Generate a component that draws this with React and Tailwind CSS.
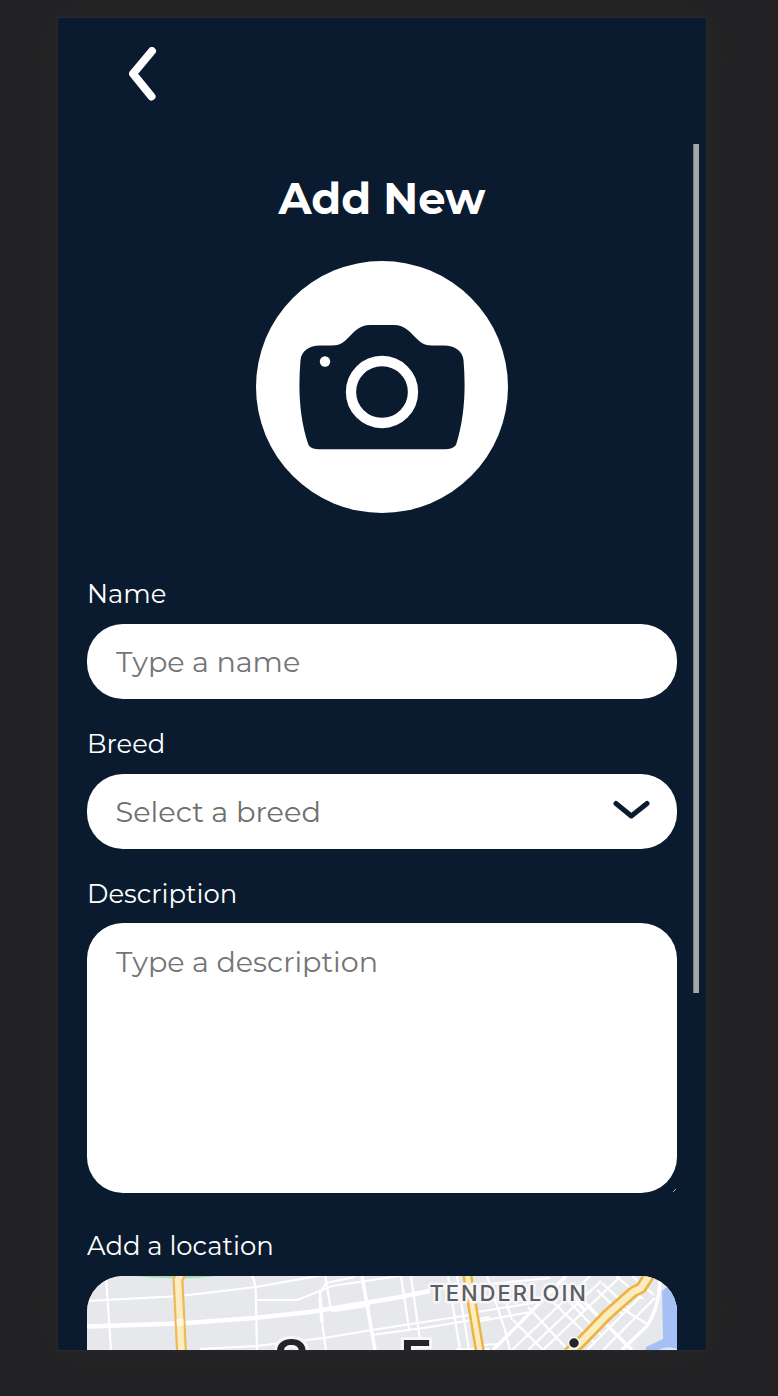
import React from "react";

function BackIcon() {
  return (
    <svg className="block" width="28" height="54" viewBox="129 47 28 54" fill="none">
      <path d="M152 51L133 73.700L151.500 96.500" stroke="#fff" strokeWidth="8" strokeLinecap="round" strokeLinejoin="round" />
    </svg>
  );
}

function CameraIcon() {
  return (
    <svg className="block" width="166" height="125" viewBox="299 325 166 125">
      <path
        fill="#0a1b30"
        d="M370 325H394C404 325 409 331 415 337C420 342 424 345.500 432 345.500H444C455 345.500 462.500 351 463.500 360C466 390 464.500 418 456 445C453.500 448 450 449.300 445 449.300H319C314 449.300 310.500 448 308.500 445C299.500 418 298 390 300.500 360C301.500 351 309 345.500 320 345.500H332C340 345.500 344 342 349 337C355 331 360 325 370 325Z"
      />
      <circle cx="382" cy="392" r="31" fill="#0a1b30" stroke="#fff" strokeWidth="10.300" />
      <circle cx="325" cy="361.500" r="5.200" fill="#fff" />
    </svg>
  );
}

function CityMap() {
  return (
    <svg className="block" width="590" height="74" viewBox="87 1276 590 74">
      <rect x="87" y="1276" width="590" height="74" fill="#e7e8ec" />
      <path d="M126 1275Q170 1281 214 1276.500V1275Z" fill="#a8dcb3" />
      <path d="M677 1283L668 1286L662 1291L663 1339L646 1347V1350H677Z" fill="#a5c0f5" />
      <path d="M658 1350Q668 1345 677 1349V1350Z" fill="#d8e5fc" />

      <g fill="none" stroke="#fff" strokeWidth="2.200">
        <path d="M106 1276L111 1350M87 1301L180 1296L256 1287L324 1275M252 1276Q256 1282 256 1300L257 1350M256 1300H297L320 1291L332 1286L400 1276" />
        <path d="M325 1275L331 1310M326 1283L320 1293L322 1322L326 1350M326 1283L355 1277M200 1349L256 1346L324 1338L372 1330L470 1315" />
        <path d="M401 1276L409 1329M411 1276L420 1340M372 1335L430 1327L490 1317M448 1276L460 1350M457 1276L469 1350M470 1313L534 1303M470 1323L530 1312M470 1286L550 1278M500 1284L512 1320" />
        <path d="M487 1276L505 1330L510 1350M481 1345L500 1344M513 1320L543 1350M528 1307L568 1350M547 1296L595 1343M558 1290L602 1336M597 1290L622 1314M602 1283L630 1309M620 1307L647 1324" />
        <path d="M512 1350L590 1276M528 1350L601 1281M543 1350L620 1277M570 1350L618 1302M587 1350L640 1297M603 1350L655 1298M616 1276L643 1299M632 1276L654 1295" />
      </g>
      <g fill="none" stroke="#fff" strokeWidth="4.500">
        <path d="M87 1326.500L180 1323.500L254 1318L310 1312L395 1298L430 1291" />
        <path d="M331 1310L370 1304" strokeWidth="5" />
        <path d="M362 1276L375 1350M320 1298L322 1322M493 1350L520 1323L566 1276M585 1303L632 1350M570 1296L585 1310M622 1350L647 1326Q660 1306 660 1276M456 1350L490 1350" strokeWidth="3.500" />
      </g>

      <g fill="none" strokeLinejoin="round">
        <path d="M181 1273L178 1280L179.500 1310L181.500 1352" stroke="#edb95a" strokeWidth="11" />
        <path d="M181 1273L178 1280L179.500 1310L181.500 1352" stroke="#fdecbf" strokeWidth="6.500" />
        <path d="M180 1319L180.300 1326" stroke="#fff7df" strokeWidth="7" />
        <path d="M467 1273L473 1310L480 1352" stroke="#ecb543" strokeWidth="10" />
        <path d="M467 1273L473 1310L480 1352" stroke="#fdecbf" strokeWidth="5" />
        <path d="M650 1274L641 1288L633 1292L607 1315L580 1343L568 1353" stroke="#ecb543" strokeWidth="12" />
        <path d="M650 1274L641 1288L633 1292L607 1315L580 1343L568 1353" stroke="#fdecbf" strokeWidth="6.500" />
      </g>

      <g className="font-['Inter',sans-serif]" stroke="#f7f7f9" strokeLinejoin="round" paintOrder="stroke">
        <text x="429.500" y="1301" fontSize="22" fontWeight="500" fill="#5b5e62" strokeWidth="5" textLength="156.500">
          TENDERLOIN
        </text>
        <text x="273.500" y="1378" fontSize="54" fontWeight="600" fill="#242527" strokeWidth="6">
          S
        </text>
        <text x="400" y="1378.500" fontSize="54" fontWeight="600" fill="#242527" strokeWidth="6">
          F
        </text>
      </g>
      <circle cx="574" cy="1343" r="5.500" fill="#242527" stroke="#f7f7f9" strokeWidth="1.500" />
    </svg>
  );
}

function Label({ children, className = "" }) {
  return <label className={"block h-[30px] whitespace-nowrap text-[25.9px] leading-[30px] text-white " + className}>{children}</label>;
}

export default function App() {
  return (
    <div className="h-[1396px] w-[778px] overflow-hidden bg-[#222224] pl-[58px] pt-[18px] font-['Montserrat','Inter',sans-serif]">
      <main className="relative h-[1332px] w-[648px] overflow-hidden bg-[#0a1b30] px-[29px] shadow-[0_0_0_1px_#28292c,0_0_40px_#29292b]">
        <button className="ml-[42px] mt-[29px] block" aria-label="Back">
          <BackIcon />
        </button>
        <h1 className="mt-[71px] h-[54px] whitespace-nowrap text-center text-[43.2px] font-bold leading-[54px] text-white">Add New</h1>
        <div className="mx-auto mt-[35px] flex h-[252px] w-[252px] items-center justify-center rounded-full bg-white">
          <CameraIcon />
        </div>
        <form className="mt-[66px]">
          <Label>Name</Label>
          <input
            className="mt-[15px] block h-[75px] w-[590px] rounded-[36px] bg-white px-[29px] text-[28.6px] outline-none placeholder:text-[#757575]"
            placeholder="Type a name"
          />
          <Label className="mt-[30px]">Breed</Label>
          <div className="mt-[15px] flex h-[75px] w-[590px] items-center justify-between rounded-[36px] bg-white pl-[28.5px] pr-[27px] text-[28.8px] leading-[37px] text-[#6f6f6f]">
            <span>Select a breed</span>
            <svg className="-mt-1" width="37" height="20" viewBox="613 799 37 20" fill="none">
              <path d="M616 802.500L631.300 815L647 802.500" stroke="#0a1b30" strokeWidth="5" strokeLinecap="round" strokeLinejoin="round" />
            </svg>
          </div>
          <Label className="mt-[30px]">Description</Label>
          <div className="relative mt-[14px] h-[270px] w-[590px]">
            <textarea
              className="block h-[270px] w-[590px] resize-none rounded-[36px] bg-white px-[29px] py-[21px] text-[28.6px] leading-[36px] outline-none placeholder:text-[#757575]"
              placeholder="Type a description"
            />
            <svg className="absolute bottom-0 right-0" width="5" height="5" viewBox="0 0 5 5">
              <path d="M1 4L4 1" stroke="#aab0b8" />
            </svg>
          </div>
          <Label className="mt-[38px]">Add a location</Label>
          <div className="mt-[15px] h-[270px] w-[590px] overflow-hidden rounded-[36px] bg-[#e7e8ec]">
            <CityMap />
          </div>
        </form>
        <div className="absolute left-[635px] top-[126px] h-[849px] w-[6px] border-l border-[#777f89] bg-[#a3a7ab]" />
      </main>
    </div>
  );
}
